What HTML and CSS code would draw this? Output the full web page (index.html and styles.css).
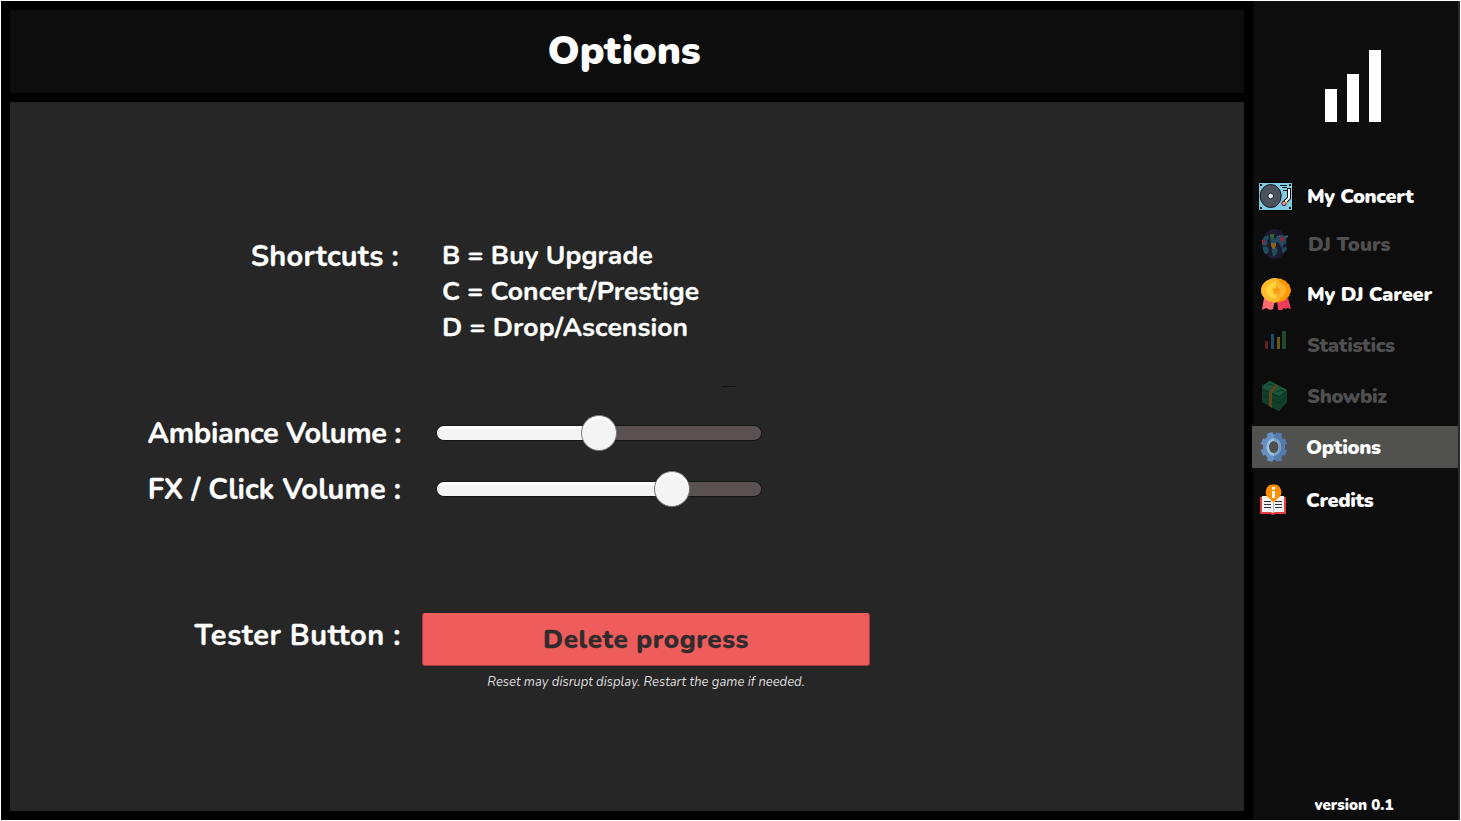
FILE: index.html
```html
<!DOCTYPE html>
<html lang="en">
<head>
	<meta charset="UTF-8" />
	<title>Options</title>
	<link rel="stylesheet" href="styles.css">
</head>
<body>
	<div class="game">
		<main class="main">
			<header class="header"><h1 class="title">Options</h1></header>
			<section class="panel">
				<div class="row shortcuts">
					<div class="label label-shortcuts">Shortcuts :</div>
					<div class="keys">
						<div>B = Buy Upgrade</div>
						<div>C = Concert/Prestige</div>
						<div>D = Drop/Ascension</div>
					</div>
				</div>
				<div class="speck"></div>
				<div class="row volume">
					<div class="label label-ambiance">Ambiance Volume :</div>
					<div class="slider">
						<div class="fill" style="width: 50%"></div>
						<div class="knob" style="left: 50%"></div>
					</div>
				</div>
				<div class="row volume">
					<div class="label label-fx">FX / Click Volume :</div>
					<div class="slider">
						<div class="fill" style="width: 72.4%"></div>
						<div class="knob" style="left: 72.4%"></div>
					</div>
				</div>
				<div class="row tester">
					<div class="label label-tester">Tester Button :</div>
					<div class="reset">
						<button class="delete">Delete progress</button>
						<p class="note">Reset may disrupt display. Restart the game if needed.</p>
					</div>
				</div>
			</section>
		</main>

		<aside class="sidebar">
			<svg class="logo" width="56" height="72" shape-rendering="crispEdges" fill="#fff">
				<path d="M0 39h12v33H0zM22 24h12v48H22zM44 0h12v72H44z" />
			</svg>
			<nav class="nav">
				<a class="item concert">
					<svg class="icon" viewBox="0 0 42 42">
						<g shape-rendering="crispEdges">
							<path fill="#000" d="M6 7h35v29H6z" />
							<path fill="#7fcbe2" d="M7 8h33v27H7z" />
							<path fill="#101820" d="M8 9h2v2H8zM37 9h2v2h-2zM8 32h2v2H8zM37 32h2v2h-2zM28 10h7v1h-7zM30 12h5v1h-5zM31 15h4v1h-4z" />
						</g>
						<ellipse cx="18.700" cy="21" rx="10.500" ry="11.500" fill="#4c545d" stroke="#101820" />
						<ellipse cx="18.700" cy="21" rx="7" ry="8" fill="none" stroke="#434a52" />
						<circle cx="18.700" cy="21" r="2.900" fill="#e2e8ec" stroke="#101820" />
						<path d="M37 13v10l-5 5" fill="none" stroke="#000" stroke-width="4" />
						<path d="M37 14v9l-5 5" fill="none" stroke="#fff" stroke-width="2" />
						<circle cx="32" cy="28.500" r="2.200" fill="#f48ba5" stroke="#3b2230" />
						<path d="M33 26l2 2" stroke="#f5cf4a" stroke-width="1.500" />
					</svg>
					<span>My Concert</span>
				</a>
				<a class="item tours">
					<svg class="icon" viewBox="0 0 42 42">
						<ellipse cx="22.500" cy="21" rx="12.500" ry="15" fill="#1c1b30" />
						<path fill="#204c60" d="M10 18l2-4 4-2 1 3-2 3 1 3-3 2-3-1zM11 24l3-1 3 3-1 4-3 1-2-4zM18 16l5-1 3 2-1 3-3 2h-3zM20 25l4-1 2 3-2 5-3 2-1-5zM24 14l4-2 5 1 3-1v2l-2 2v4l-3 2v3l-2-1-2-4-3-2zM30 25l4-1 1 2-3 4-2-1z" />
						<path fill="#2c6530" d="M18 11h4v3l-2 3-2-3z" />
						<path fill="#86283c" d="M28 14h4v3l-2 3-2-3zM10 17h3v3l-1 1-2-1z" />
						<path fill="#8a6420" d="M19 20h5v3l-2 3h-1l-2-3z" />
						<path stroke="#3c5968" fill="none" d="M25 13.500h3m4 0h4" />
					</svg>
					<span>DJ Tours</span>
				</a>
				<a class="item career">
					<svg class="icon" viewBox="0 0 42 42">
						<path fill="#ff696f" d="M12 25l-2 12 4-2 2 1 3 1 2-1 2-9z" />
						<path fill="#ed3d5b" d="M25 28l1 9 4 0 2-2 2 1 1-1 4 1-3-11z" />
						<ellipse cx="24" cy="17.300" rx="14.400" ry="11.800" fill="#ff9800" stroke="#ff9800" stroke-dasharray="3 2" />
						<path fill="#fdb92c" d="M24 5a15 12.300 0 0 0 0 24.600q6-4 6-12.300T24 5" />
						<ellipse cx="24" cy="17.300" rx="10" ry="8.300" fill="#fbb42d" />
						<path fill="#ffd43b" d="M24 9a10 8.300 0 0 0 0 16.600z" />
						<path fill="#f79a10" d="M24.500 12.500l1.500 3 3.500.5-2.500 2 .7 3.500-3.200-1.500-3 1.500.5-3.500-2.500-2 3.500-.5z" />
					</svg>
					<span>My DJ Career</span>
				</a>
				<a class="item stats">
					<svg class="icon" viewBox="0 0 42 42" shape-rendering="crispEdges">
						<path fill="#662024" d="M13 17h3v8h-3z" />
						<path fill="#204c6b" d="M19 10h3v15h-3z" />
						<path fill="#6a5718" d="M25 13h3v12h-3z" />
						<path fill="#1d4b2c" d="M30 7h4v18h-4z" />
					</svg>
					<span>Statistics</span>
				</a>
				<a class="item showbiz">
					<svg class="icon" viewBox="0 0 42 42">
						<path fill="#164c32" d="M10 11l8-5 17 9v12l-8 9-17-9z" />
						<path fill="#10402a" d="M10 14l17 7v15l-17-9zM27 22l8-6v11l-8 9z" />
						<path fill="#195638" d="M10 11l8-5 17 9-8 6z" />
						<path fill="none" stroke="#0d3322" d="M10 20l17 8 8-7M10 14l17 8 8-6M14 11l4-2 4 2M25 17l4-2 3 1" />
						<path fill="#62431f" d="M17 17l7-8 2 2-6 7v15l-3-2z" />
					</svg>
					<span>Showbiz</span>
				</a>
				<a class="item options active">
					<svg class="icon" viewBox="0 0 42 42">
						<g fill="#6791c5" stroke="#6791c5" stroke-width="6">
							<path d="M22 21L17.600 6.800M22 21L10 15M22 21L10 27M22 21L17.600 35.200" />
							<ellipse cx="22" cy="21" rx="8" ry="10" />
						</g>
						<g fill="#557aad" stroke="#557aad" stroke-width="6">
							<path d="M25.500 18L27 6.800M25 19L34 15M25 23L34 27M25.500 24L27 35.200" />
							<path stroke="none" d="M22 8c14 0 14 26 0 26z" />
						</g>
						<ellipse cx="21.800" cy="21" rx="6" ry="7.400" fill="#4f4f4e" stroke="#9bc3dd" stroke-width="2.600" />
						<path d="M22 13.600c7.800 0 7.800 14.800 0 14.800" fill="none" stroke="#789fc8" stroke-width="2.600" />
					</svg>
					<span>Options</span>
				</a>
				<a class="item credits">
					<svg class="icon" viewBox="0 1 42 42">
						<path fill="#e83b3e" d="M8 19h26v17H24l-3 1-3-1H8z" />
						<path fill="#f3f3f3" d="M10 18h9l2 2 2-2h9v16h-9l-2 1-2-1h-9z" />
						<path stroke="#30343b" d="M12 23.500h7m4 0h7M12 26.500h7m4 0h7M12 29.500h7m4 0h7" />
						<path stroke="#b9bdc0" d="M21.500 21v14" />
						<path fill="#ff9000" d="M21.500 6.500a7.500 7.500 0 0 1 4 14l-4 4-4-4a7.500 7.500 0 0 1 4-14" />
						<path fill="#fff" d="M20 9h3v2.500h-3zM20 13h3v7h-3z" />
					</svg>
					<span>Credits</span>
				</a>
			</nav>
			<div class="version">version 0.1</div>
		</aside>
	</div>
</body>
</html>
```

FILE: styles.css
```css
* {
	box-sizing: border-box;
}

body {
	margin: 0;
	background: #000;
	color: #fff;
	font-family: Nunito, Lato, "Open Sans", sans-serif;
	font-variant-ligatures: none;
}

.game {
	display: flex;
	width: 1461px;
	height: 821px;
	border: 1px solid #fff;
	overflow: hidden;
}

.main {
	display: flex;
	flex-direction: column;
	gap: 9px;
	width: 1251px;
	padding: 9px 8px 9px 9px;
}

.header {
	height: 83px;
	background: #0d0d0d;
	text-align: center;
}

.title {
	margin: 0;
	padding-right: 6px;
	font-size: 40px;
	font-weight: 900;
	letter-spacing: -0.15px;
	line-height: 83px;
}

.panel {
	flex: 1;
	padding-top: 135px;
	background: #262626;
}

.row {
	display: flex;
}

.label {
	width: 391px;
	font-size: 29px;
	font-weight: 700;
	line-height: 40px;
	text-align: right;
	white-space: nowrap;
	-webkit-text-stroke: 0.3px #fff;
}

.label-shortcuts {
	padding-right: 2px;
	letter-spacing: 0.2px;
}

.label-ambiance {
	padding-top: 2px;
	letter-spacing: -0.35px;
}

.label-fx {
	padding-top: 2px;
	letter-spacing: 0.1px;
}

.label-tester {
	padding-top: 3px;
	letter-spacing: 0.55px;
}

.keys {
	margin-left: 41px;
	font-size: 26.5px;
	font-weight: 700;
	letter-spacing: 0.08px;
	line-height: 36.2px;
	white-space: nowrap;
	-webkit-text-stroke: 0.3px #fff;
}

.speck {
	width: 14px;
	height: 1px;
	margin: 40.4px 0 18px 712px;
	background: #151515;
}

.volume {
	height: 56px;
	align-items: center;
}

.slider {
	position: relative;
	width: 326px;
	height: 16px;
	margin-left: 35px;
	border: 1px solid #161616;
	border-radius: 8px;
	background: #5a5252;
}

.fill {
	height: 14px;
	border-radius: 7px 0 0 7px;
	border-top: 3px solid #fff;
	background: #f4f4f4;
}

.knob {
	position: absolute;
	top: -11px;
	width: 36px;
	height: 36px;
	margin-left: -18px;
	border: 1px solid #777;
	border-radius: 50%;
	background: #f4f4f4;
	box-shadow: inset 0 3px 1px #fff;
}

.tester {
	margin-top: 96px;
}

.reset {
	width: 448px;
	margin-left: 21px;
}

.delete {
	display: block;
	width: 448px;
	height: 53px;
	padding: 0;
	border: 1px solid #a33e3f;
	border-top-color: #ef5c5c;
	border-radius: 3px;
	background: #ef5c5c;
	color: #302c2d;
	font-family: inherit;
	font-size: 26px;
	font-weight: 800;
	letter-spacing: 0.6px;
	-webkit-text-stroke: 0.3px #302c2d;
}

.note {
	margin: 7px 0 0;
	color: #ddd;
	font-size: 13px;
	font-style: italic;
	line-height: 18px;
	text-align: center;
}

.sidebar {
	display: flex;
	flex-direction: column;
	width: 208px;
	border-left: 1px solid #000;
	border-right: 2px solid #2a2a2a;
	background: #0d0d0d;
}

.logo {
	margin: 49px 0 0 72px;
}

.nav {
	display: flex;
	flex-direction: column;
	margin-top: 53px;
}

.item {
	display: flex;
	align-items: center;
	height: 42px;
	margin-bottom: 9px;
	margin-left: -1px;
	font-size: 20px;
	font-weight: 900;
	letter-spacing: -0.35px;
	line-height: 28px;
	white-space: nowrap;
}

.item span {
	padding-top: 2px;
}

.icon {
	width: 42px;
	height: 42px;
	margin-right: 13px;
}

.concert {
	margin-bottom: 6px;
}

.tours {
	margin-bottom: 8px;
	letter-spacing: 0;
}

.tours .icon {
	margin-right: 14px;
}

.career {
	letter-spacing: -0.15px;
}

.tours,
.stats,
.showbiz {
	color: #4f4f4f;
}

.options {
	margin-bottom: 11px;
}

.options .icon,
.credits .icon {
	margin-right: 12px;
}

.active {
	background: #51514f;
}

.version {
	margin-top: auto;
	padding: 0 3px 6px 0;
	font-size: 15px;
	font-weight: 900;
	line-height: 18px;
	text-align: center;
}
```
